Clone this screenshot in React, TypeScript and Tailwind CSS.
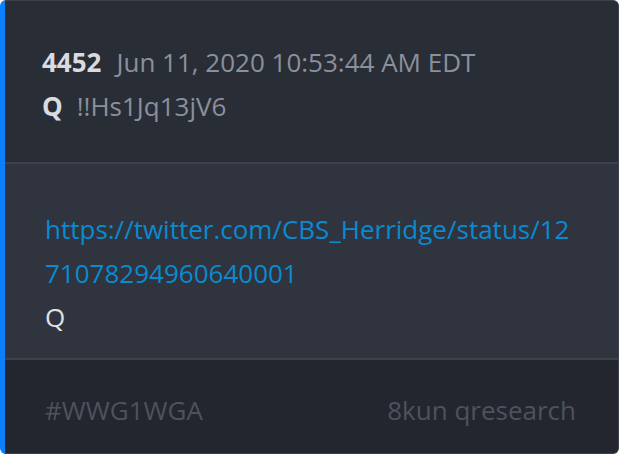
export default function App() {
  return (
    <div className="w-[620px] h-[454px] bg-white" style={{ fontFamily: '"Open Sans", sans-serif' }}>
      <div className="w-[619px] h-[454px] flex flex-col rounded-md overflow-hidden border border-[#3c414b] border-l-[5px] border-l-[#0a80ff] bg-[#292d36]">
        <div className="bg-[#292d36] pl-[37px] pt-[39px] h-[161px] text-[26px] leading-[44px]">
          <div className="flex items-center">
            <span className="font-bold text-[#d9dbe0]">4452</span>
            <span className="ml-[15px] text-[#8b909c]">Jun 11, 2020 10:53:44 AM EDT</span>
          </div>
          <div className="flex items-center">
            <span className="font-bold text-[#d9dbe0]">Q</span>
            <span className="ml-[14px] text-[#8b909c]">!!Hs1Jq13jV6</span>
          </div>
        </div>
        <div className="h-[2px] bg-[#3c414b]" />
        <div className="bg-[#2f343e] pl-[40px] pt-[43px] h-[194px] text-[26px] leading-[44px]">
          <div className="w-[534px] text-[#0a8ad0] break-all">https://twitter.com/CBS_Herridge/status/1271078294960640001</div>
          <div className="text-[#dfe1e5]">Q</div>
        </div>
        <div className="h-[2px] bg-[#3c414b]" />
        <div className="flex-1 bg-[#23262e] pl-[40px] pr-[42px] pt-[28px] text-[26px] leading-[44px] flex justify-between items-start">
          <span className="text-[#4d525e]">#WWG1WGA</span>
          <span className="text-[#4d525e]">8kun qresearch</span>
        </div>
      </div>
    </div>
  );
}
